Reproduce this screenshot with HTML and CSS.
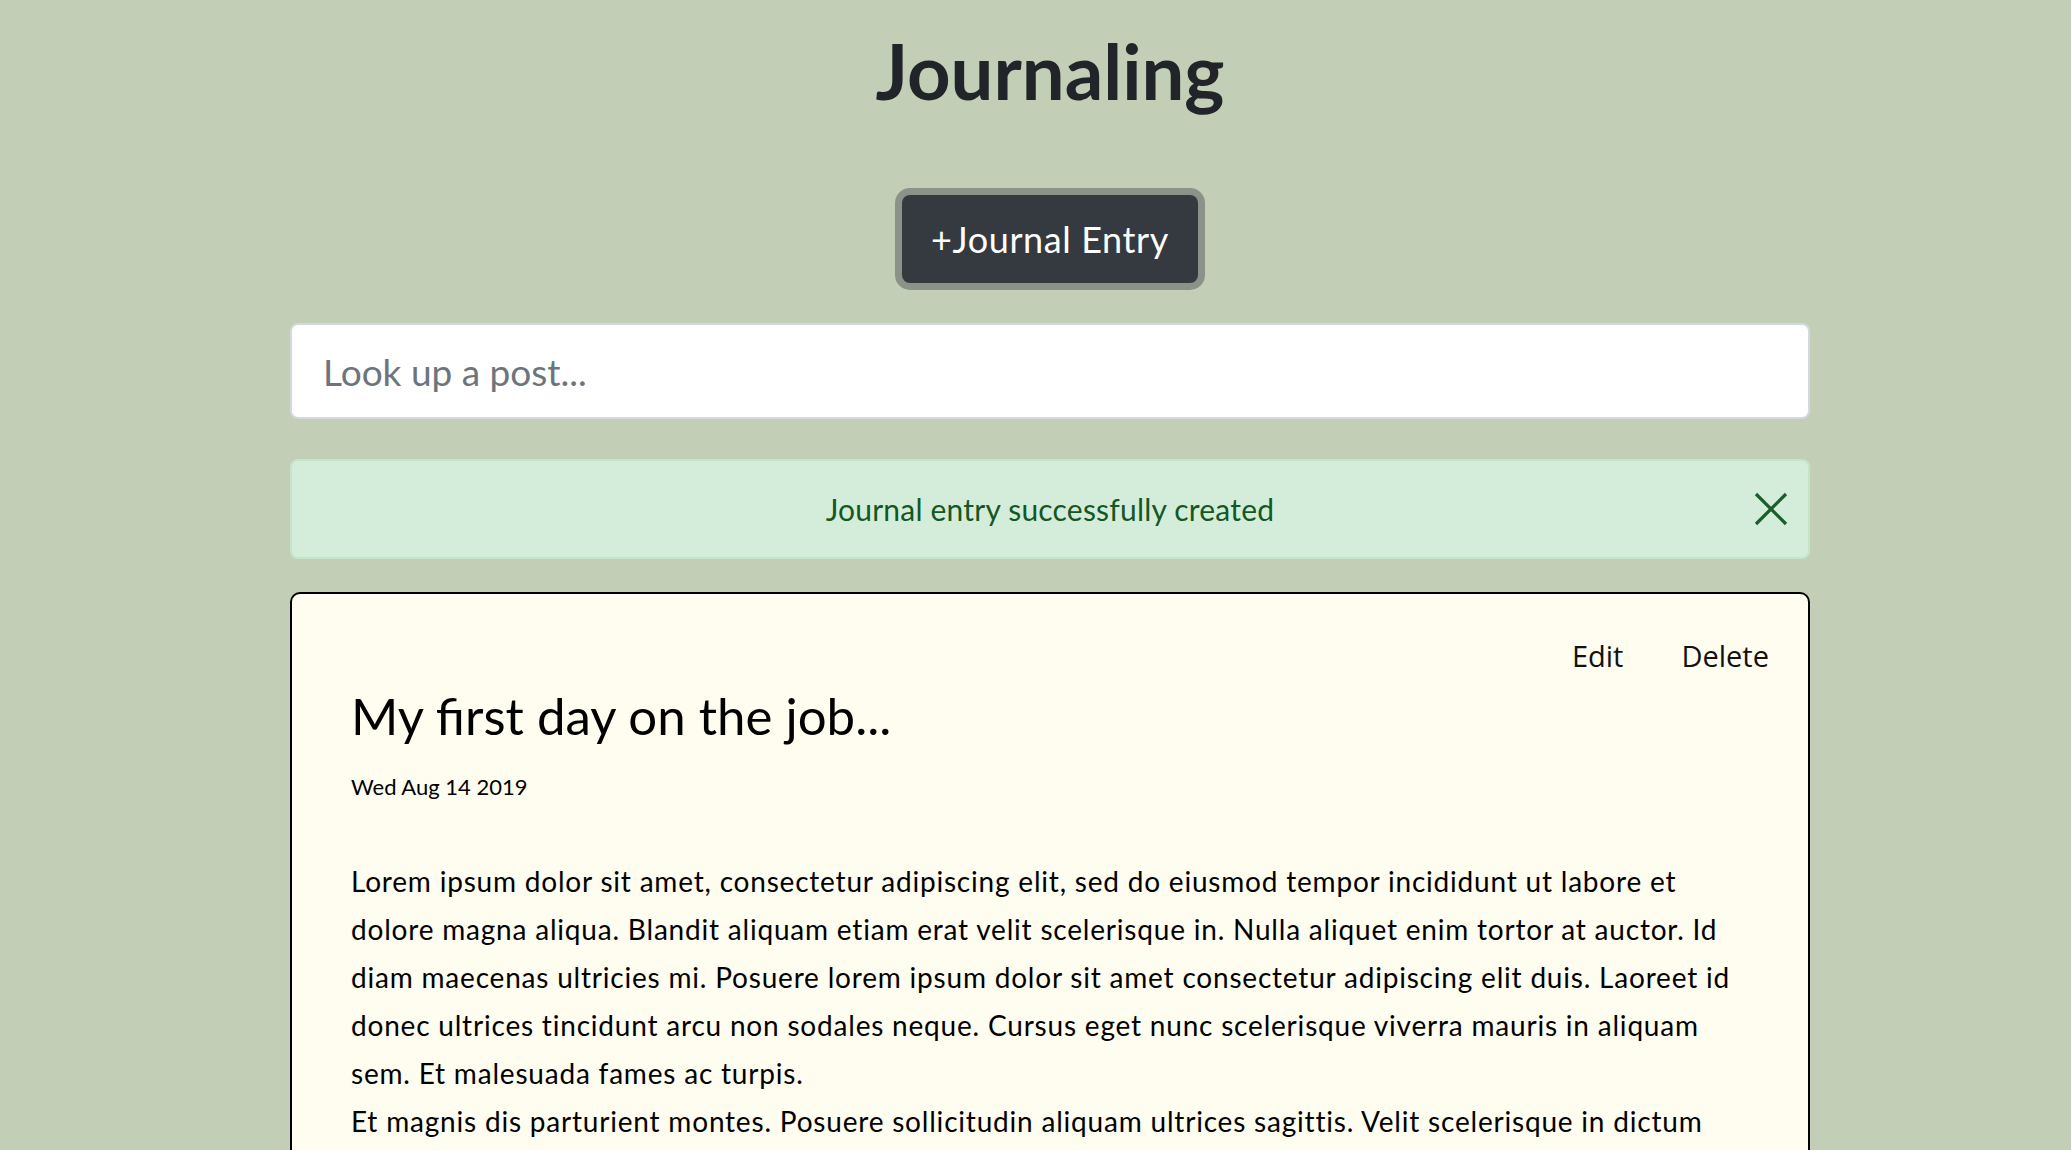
FILE: index.html
```html
<!DOCTYPE html>
<html lang="en">
<head>
<meta charset="utf-8">
<title>Journaling</title>
<link rel="stylesheet" href="styles.css">
</head>
<body>
<main class="page">
  <h1 class="page-title">Journaling</h1>
  <div class="actions">
    <button class="btn-new" type="button">+Journal Entry</button>
  </div>
  <input class="search" type="text" placeholder="Look up a post...">
  <div class="alert">
    <span class="alert-text">Journal entry successfully created</span>
    <button class="alert-close" type="button" aria-label="Close">
      <svg width="34" height="34" viewBox="0 0 34 34"><path d="M2 2 L32 32 M32 2 L2 32" stroke="#1a5e2b" stroke-width="3.2" fill="none"/></svg>
    </button>
  </div>
  <article class="card">
    <div class="card-tools">
      <a class="tool">Edit</a>
      <a class="tool">Delete</a>
    </div>
    <h2 class="entry-title">My first day on the job...</h2>
    <div class="entry-date">Wed Aug 14 2019</div>
    <div class="entry-body">
      <p>Lorem ipsum dolor sit amet, consectetur adipiscing elit, sed do eiusmod tempor incididunt ut labore et dolore magna aliqua. Blandit aliquam etiam erat velit scelerisque in. Nulla aliquet enim tortor at auctor. Id diam maecenas ultricies mi. Posuere lorem ipsum dolor sit amet consectetur adipiscing elit duis. Laoreet id donec ultrices tincidunt arcu non sodales neque. Cursus eget nunc scelerisque viverra mauris in aliquam sem. Et malesuada fames ac turpis.</p>
      <p>Et magnis dis parturient montes. Posuere sollicitudin aliquam ultrices sagittis. Velit scelerisque in dictum varius consectetur a erat nam at. Purus in massa tempor nec feugiat nisl pretium fusce id.</p>
    </div>
  </article>
</main>
</body>
</html>
```
FILE: styles.css
```css
* { box-sizing: border-box; }
html, body { margin: 0; padding: 0; }
body {
  background: #c2ceb5;
  font-family: Lato, "Open Sans", sans-serif;
  color: #000;
}
.page {
  width: 1520px;
  margin-left: 290px;
  padding-top: 33px;
  display: flex;
  flex-direction: column;
}
.page-title {
  margin: 0;
  text-align: center;
  font-size: 76px;
  line-height: 76px;
  font-weight: 700;
  color: #212529;
}
.actions {
  display: flex;
  justify-content: center;
  margin-top: 86px;
}
.btn-new {
  width: 296px;
  height: 88px;
  background: #343a40;
  color: #fff;
  border: none;
  border-radius: 8px;
  box-shadow: 0 0 0 7px #8b9389;
  font-family: Lato, sans-serif;
  font-size: 36px;
  letter-spacing: 0.6px;
  padding: 0;
}
.search {
  margin-top: 40px;
  height: 96px;
  width: 100%;
  border: 2px solid #d3d9de;
  border-radius: 8px;
  background: #fff;
  padding: 0 31px;
  font-family: Lato, sans-serif;
  font-size: 37px;
  color: #495057;
  outline: none;
}
.search::placeholder { color: #6c757d; }
.alert {
  margin-top: 40px;
  height: 100px;
  background: #d4edda;
  border: 2px solid #c3e6cb;
  border-radius: 8px;
  display: flex;
  align-items: center;
  justify-content: center;
  position: relative;
  color: #155724;
  font-size: 30px;
  letter-spacing: 0.2px;
}
.alert-close {
  position: absolute;
  right: 19px;
  top: 30px;
  background: none;
  border: none;
  padding: 0;
  width: 36px;
  height: 36px;
  display: flex;
  align-items: center;
  justify-content: center;
}
.card {
  margin-top: 33px;
  background: #fffdf0;
  border: 2px solid #000;
  border-radius: 10px;
  padding: 41px 39px 60px 59px;
  min-height: 800px;
}
.card-tools {
  display: flex;
  justify-content: flex-end;
  gap: 58px;
  font-family: "Open Sans", sans-serif;
  font-size: 29px;
  line-height: 42px;
  color: #111;
}
.entry-title {
  margin: 10px 0 0;
  font-size: 51px;
  line-height: 58px;
  font-weight: 400;
  color: #000;
}
.entry-date {
  margin-top: 30px;
  font-size: 22px;
  line-height: 24px;
}
.entry-body {
  margin-top: 58px;
  padding-right: 10px;
  font-size: 28px;
  letter-spacing: 0.8px;
  line-height: 48px;
}
.entry-body p { margin: 0; }
```
